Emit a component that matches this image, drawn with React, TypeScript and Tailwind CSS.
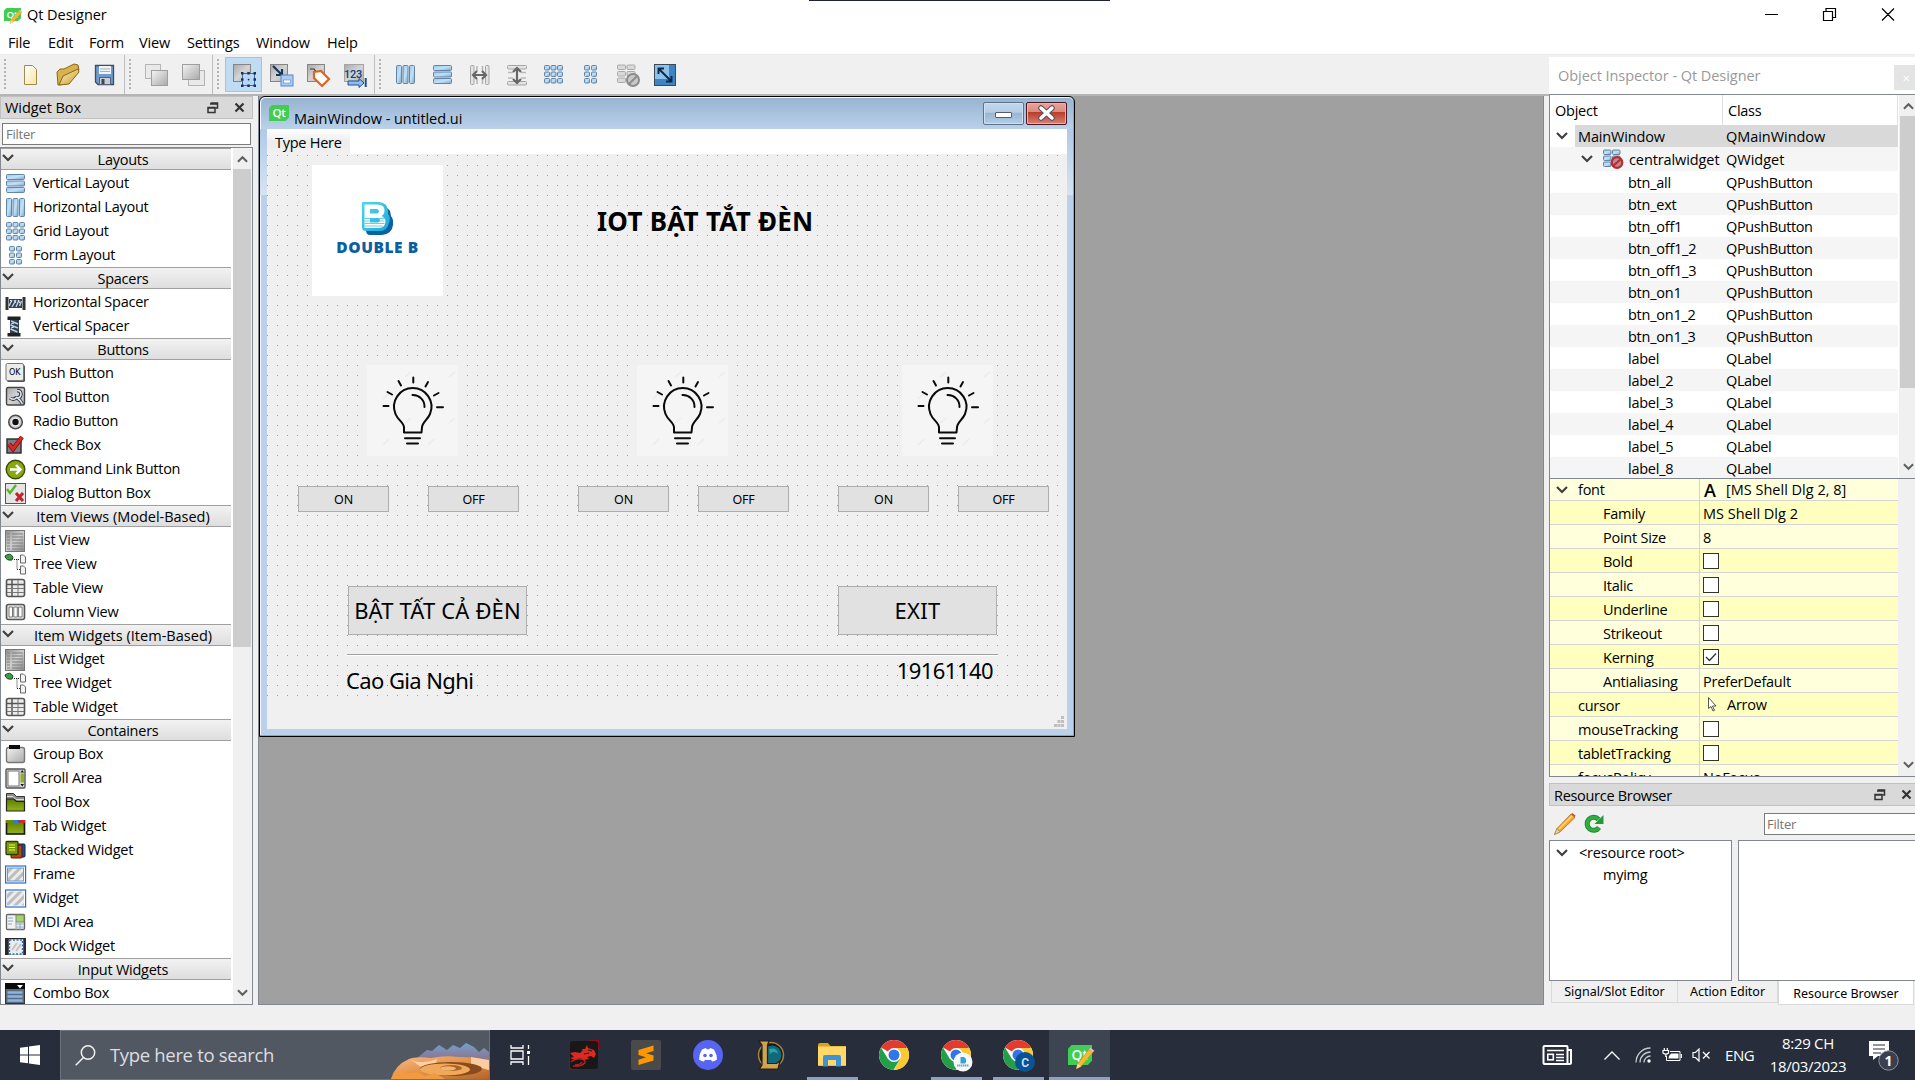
import React from "react";

const SEGOE = "font-['Open_Sans','Noto_Sans',sans-serif]";
const TAHOMA = "font-['Noto_Sans','Open_Sans',sans-serif]";

function Defs() {
  return (
    <svg width="0" height="0" className="absolute">
      <defs>
        <linearGradient id="blue" x1="0" y1="0" x2="1" y2="1">
          <stop offset="0" stopColor="#9cc6ea" />
          <stop offset="0.5" stopColor="#bfe2fa" />
          <stop offset="1" stopColor="#7ba6cf" />
        </linearGradient>
        <linearGradient id="gray" x1="0" y1="0" x2="1" y2="1">
          <stop offset="0" stopColor="#f4f4f4" />
          <stop offset="1" stopColor="#a9a9a9" />
        </linearGradient>
        <linearGradient id="dgray" x1="0" y1="0" x2="1" y2="1">
          <stop offset="0" stopColor="#8e8e8e" />
          <stop offset="0.5" stopColor="#cfcfcf" />
          <stop offset="1" stopColor="#8a8a8a" />
        </linearGradient>
        <linearGradient id="lgray" x1="0" y1="0" x2="1" y2="1">
          <stop offset="0" stopColor="#a8a8a8" />
          <stop offset="0.5" stopColor="#d4d4d4" />
          <stop offset="1" stopColor="#b4b4b4" />
        </linearGradient>
        <linearGradient id="green" x1="0" y1="0" x2="0" y2="1">
          <stop offset="0" stopColor="#5f7d00" />
          <stop offset="1" stopColor="#93b41a" />
        </linearGradient>
        <linearGradient id="gold" x1="0" y1="0" x2="1" y2="1">
          <stop offset="0" stopColor="#fdf3c0" />
          <stop offset="1" stopColor="#c99b2c" />
        </linearGradient>
        <linearGradient id="paper" x1="0" y1="0" x2="1" y2="1">
          <stop offset="0" stopColor="#ffffff" />
          <stop offset="1" stopColor="#f5e7a0" />
        </linearGradient>
        <linearGradient id="logo" x1="0" y1="0" x2="1" y2="1">
          <stop offset="0" stopColor="#4fd8ef" />
          <stop offset="1" stopColor="#1fa6d6" />
        </linearGradient>
        <linearGradient id="mount" x1="0" y1="0" x2="0" y2="1">
          <stop offset="0" stopColor="#6fa3cf" />
          <stop offset="0.5" stopColor="#8a7a9a" />
          <stop offset="1" stopColor="#7d6a78" />
        </linearGradient>
        <linearGradient id="sand" x1="0" y1="0" x2="1" y2="1">
          <stop offset="0" stopColor="#f7b98c" />
          <stop offset="0.5" stopColor="#e39445" />
          <stop offset="1" stopColor="#b5622a" />
        </linearGradient>
        <pattern id="hatch" width="6" height="6" patternUnits="userSpaceOnUse" patternTransform="rotate(45)">
          <rect width="6" height="6" fill="#ececec" />
          <rect width="3" height="6" fill="#bdbdbd" />
        </pattern>
      </defs>
    </svg>
  );
}

const rects = (list: number[][], fill = "url(#blue)", stroke = "#6583a3") =>
  list.map(([x, y, w, h], i) => <rect key={i} x={x} y={y} width={w} height={h} rx="1" fill={fill} stroke={stroke} />);

const grid = (cols: number[], rows: number[], w: number, h: number) =>
  rows.flatMap((y) => cols.map((x) => [x, y, w, h]));

const listIcon = (
  <>
    <rect x="0.5" y="0.5" width="19" height="21" fill="url(#dgray)" stroke="#777" />
    <path d="M2 4h3M7 4h11M2 7h3M7 7h11M2 10h3M7 10h11M2 13h3M7 13h11M2 16h3M7 16h11M2 19h3M7 19h11" stroke="#7f7f7f" />
  </>
);
const treeIcon = (
  <>
    <path d="M0 2q5-4 8 1l-1 3q-6 1-7-4z" fill="#3f9a48" stroke="#124d1b" />
    <path d="M9 5.500h6M12 5.500v10h3" stroke="#222" strokeDasharray="1 1" fill="none" />
    <path d="M15.500 1h3l2 2v6h-5zM15.500 12h3l2 2v6h-5z" fill="#f4f4f4" stroke="#666" />
  </>
);
const tableIcon = (
  <>
    <rect x="1.500" y="1.500" width="18" height="17" rx="2" fill="#ececec" stroke="#555" strokeWidth="1.600" />
    <path d="M2 6.500h17M7 2v16" stroke="#555" strokeWidth="1.500" />
    <path d="M2 10.500h17M2 14.500h17M13 2v16" stroke="#777" strokeWidth="1" />
  </>
);

const icons: Record<string, React.ReactNode> = {
  vl: rects([[1.5, 1.5, 18, 5], [1.5, 8, 18, 5], [1.5, 14.5, 18, 5]]),
  hl: rects([[1.5, 1.5, 5, 18], [8, 1.5, 5, 18], [14.5, 1.5, 5, 18]]),
  gl: rects(grid([1.5, 8, 14.5], [1.5, 8, 14.5], 5, 4.5)),
  fl: rects(grid([4.5, 11.5], [1.5, 8, 14.5], 5, 4.5)),
  hs: (
    <>
      <rect x="0.5" y="5" width="3" height="13" fill="#333" />
      <rect x="17.5" y="5" width="3" height="13" fill="#333" />
      <rect x="4" y="7" width="13" height="9" fill="#333f4d" />
      <path d="M4 14l3-6M7 15l4-7M11 15l3-7M14.500 14l2-5" stroke="#b9cfe6" strokeWidth="1.500" fill="none" />
      <path d="M5 8l2 2M9 8l2 3M13 8l2 3" stroke="#e5eef6" strokeWidth="1" fill="none" />
    </>
  ),
  vs: (
    <>
      <rect x="2.500" y="0.500" width="13" height="3.500" fill="#222" />
      <rect x="2.500" y="17" width="13" height="3.500" fill="#222" />
      <rect x="5" y="4" width="9" height="13" fill="#333f4d" />
      <path d="M6 5l7 3M5.500 9l7.500 3M5.500 13l7 3" stroke="#b9cfe6" strokeWidth="1.500" fill="none" />
      <path d="M6 8l3-1M6 12l3-1" stroke="#e5eef6" fill="none" />
    </>
  ),
  pb: (
    <>
      <rect x="2" y="2" width="18" height="17" rx="1.500" fill="#555" />
      <rect x="1" y="0.500" width="17.500" height="17" rx="1.500" fill="#ececec" stroke="#777" />
      <text x="9.700" y="11.500" textAnchor="middle" fontSize="8" letterSpacing="0" fontFamily="DejaVu Sans">OK</text>
    </>
  ),
  tb: (
    <>
      <rect x="1.500" y="0.500" width="18" height="17.500" rx="1.500" fill="url(#lgray)" stroke="#444" strokeWidth="1.400" />
      <path d="M12 3.500q4 0 4 3.500t-3.500 4q3 2 5 6" stroke="#2c3440" strokeWidth="3.400" fill="none" />
      <path d="M5 11q4 3 7-1" stroke="#2c3440" strokeWidth="3.400" fill="none" />
      <path d="M12 3.500q4 0 4 3.500t-3.500 4q3 2 5 6M5 11q4 3 7-1" stroke="#dde5ee" strokeWidth="1.600" fill="none" />
    </>
  ),
  rb: (
    <>
      <circle cx="10.500" cy="11" r="6.800" fill="#c9c9c9" stroke="#4c4c4c" strokeWidth="1.500" />
      <circle cx="10.500" cy="11" r="4.500" fill="#f1f1f1" />
      <circle cx="10.500" cy="11" r="3.200" fill="#111" />
    </>
  ),
  cb: (
    <>
      <rect x="2" y="4" width="14" height="14" fill="#7e7e7e" stroke="#333" strokeWidth="1.500" />
      <path d="M4 9l4 5 9-12" stroke="#7a0c0c" strokeWidth="4.500" fill="none" />
      <path d="M4 9l4 5 9-12" stroke="#e02626" strokeWidth="3" fill="none" />
    </>
  ),
  cl: (
    <>
      <circle cx="10.500" cy="10.500" r="9.300" fill="#8aa80f" stroke="#3e4d05" strokeWidth="1.400" />
      <path d="M5 10.500h10M11 6l4.500 4.500L11 15" stroke="#fff" strokeWidth="2.400" fill="none" />
    </>
  ),
  db: (
    <>
      <rect x="0.500" y="0.500" width="20" height="20" fill="#e4e4e4" stroke="#555" />
      <path d="M2 6l3 4 6-8" stroke="#58b52c" strokeWidth="2.400" fill="none" />
      <path d="M11 10l7 8M18 10l-7 8" stroke="#c3222c" strokeWidth="3" />
    </>
  ),
  li: listIcon,
  tr: treeIcon,
  ta: tableIcon,
  co: (
    <>
      <rect x="1.500" y="2.500" width="18" height="15" rx="2" fill="#e9e9e9" stroke="#555" strokeWidth="1.600" />
      <path d="M4 5h3.500v10H4zM8.800 5h3.500v10H8.800zM13.600 5h3.500v10h-3.500z" fill="#fff" stroke="#777" />
    </>
  ),
  gb: (
    <>
      <rect x="1.500" y="3.500" width="18" height="15" rx="2" fill="url(#gray)" stroke="#777" strokeWidth="1.400" />
      <rect x="4" y="1" width="11" height="4" fill="#0c0c0c" />
    </>
  ),
  sa: (
    <>
      <rect x="1" y="1" width="19" height="19" rx="1" fill="#d6d6d6" stroke="#555" strokeWidth="1.400" />
      <rect x="3" y="3" width="11" height="15" fill="#fff" stroke="#777" />
      <rect x="15.500" y="5.500" width="3.500" height="9" fill="#8fb020" />
      <path d="M15.500 4.500l1.700-2.500 1.800 2.500zM15.500 16l1.700 2.500L19 16z" fill="#111" />
    </>
  ),
  tx: (
    <>
      <path d="M1.500 1.500h7l3 3h8v14h-18z" fill="#8c8c8c" stroke="#333" />
      <path d="M2 4.500h6l3 3h8" stroke="#ddd" fill="none" />
      <path d="M1.500 7h7l3 2.500h8v9.500h-18z" fill="url(#green)" stroke="#222" strokeWidth="1.200" />
    </>
  ),
  tw: (
    <>
      <rect x="1.500" y="5" width="18" height="13" fill="url(#green)" stroke="#161616" strokeWidth="1.600" />
      <rect x="1" y="4" width="7" height="3" fill="#6d8a05" />
      <rect x="8" y="4" width="5.500" height="3" fill="#2d7ad6" />
      <rect x="14" y="4" width="6" height="3" fill="#d3262b" />
    </>
  ),
  sw: (
    <>
      <rect x="9" y="4" width="11" height="13" rx="1" fill="#1c4f9e" stroke="#0b2450" />
      <rect x="6" y="5" width="11" height="13" rx="1" fill="#b8460f" stroke="#4b1a02" />
      <rect x="1" y="1.500" width="12" height="13" rx="1" fill="#7d9c0c" stroke="#2d3a00" strokeWidth="1.300" />
      <path d="M4 5h6M4 7.500h6M4 10h6" stroke="#e9f255" strokeWidth="1.200" />
    </>
  ),
  fr: (
    <>
      <rect x="0.600" y="2" width="20" height="17" fill="#fff" stroke="#2a6fc9" strokeWidth="1.200" />
      <rect x="2.500" y="4" width="16" height="13" fill="url(#hatch)" stroke="#6a9ad8" />
    </>
  ),
  wi: (
    <>
      <rect x="0.600" y="2" width="20" height="17" fill="#fff" stroke="#2a6fc9" strokeWidth="1.200" />
      <rect x="2" y="3.500" width="17" height="14" fill="url(#hatch)" />
    </>
  ),
  md: (
    <>
      <rect x="1.500" y="2.500" width="18" height="15" rx="1" fill="#f2f2f2" stroke="#666" strokeWidth="1.300" />
      <rect x="11" y="3" width="8" height="7" fill="#a8cf7c" stroke="#6f8f4a" />
      <path d="M3 6h5M3 9h5M3 12h4M11 12h8M11 15h8M11 10v8M15 11v7" stroke="#8fa6c4" />
    </>
  ),
  dw: (
    <>
      <rect x="0" y="2" width="21" height="17" fill="#2b2b2b" />
      <rect x="4.500" y="4" width="13" height="14" fill="#ececec" stroke="#fff" strokeWidth="1.400" />
      <rect x="4.500" y="4" width="13" height="14" fill="none" stroke="#2a6fc9" strokeWidth="1.400" strokeDasharray="2 1.500" />
      <path d="M7 14l5-7M11 15l5-7" stroke="#c2c2c2" strokeWidth="2" />
    </>
  ),
  cx: (
    <>
      <rect x="0.500" y="0.500" width="19" height="20" fill="#5e6b78" stroke="#333" />
      <rect x="0" y="0" width="20" height="6" fill="#0b0b0b" />
      <path d="M12 2h6l-3 3.500z" fill="#fff" />
      <path d="M2.500 9.500h15M2.500 13.500h15M2.500 17.500h15" stroke="#86b6ea" strokeWidth="2.400" />
    </>
  ),
  new: <path d="M4.500 1.500h8l4 4v15h-12z" fill="url(#paper)" stroke="#a38a4e" />,
  open: (
    <>
      <path d="M0 8l3-3h4L17 0l4 1 1 5-12 14-9 1z" fill="#d8b24d" stroke="#8a6518" />
      <path d="M2 21L6 12 21 5l1 3-10 12z" fill="url(#gold)" stroke="#8a6518" />
    </>
  ),
  save: (
    <>
      <path d="M1.500 1.500h18v19H4l-2.500-2.500z" fill="#6f9bcd" stroke="#3a4d69" strokeWidth="1.300" />
      <rect x="5" y="2" width="12" height="8" fill="#f1f4f8" />
      <path d="M6 5h10M6 7.500h10" stroke="#9fb0c4" />
      <rect x="5.500" y="13.500" width="11" height="7" fill="#c9cdd3" stroke="#53617a" />
      <rect x="7.500" y="15" width="3" height="5" fill="#39475d" />
    </>
  ),
  front: (
    <>
      <rect x="0.500" y="0.500" width="15" height="14" fill="#e9e9e9" stroke="#b4b4b4" />
      <rect x="6.500" y="6.500" width="16" height="15" fill="url(#gray)" stroke="#9e9e9e" />
    </>
  ),
  back: (
    <>
      <rect x="6.500" y="6.500" width="16" height="15" fill="#e9e9e9" stroke="#b4b4b4" />
      <rect x="0.500" y="0.500" width="17" height="15" fill="url(#gray)" stroke="#9e9e9e" />
    </>
  ),
  ew: (
    <>
      <rect x="0.500" y="0.500" width="17" height="17" fill="url(#lgray)" stroke="#858585" />
      <rect x="9.500" y="9.500" width="12" height="12" fill="#b9d6fa" stroke="#3a6fb8" />
      <path d="M8 8h2.500v2.500H8zM14.300 8h2.500v2.500h-2.500zM20.500 8H23v2.500h-2.500zM8 14.300h2.500v2.500H8zM20.500 14.300H23v2.500h-2.500zM8 20.500h2.500V23H8zM14.300 20.500h2.500V23h-2.500zM20.500 20.500H23V23h-2.500z" fill="#1b3152" />
      <rect x="14.800" y="14.800" width="1.600" height="1.600" fill="#1b3152" />
    </>
  ),
  es: (
    <>
      <rect x="0.500" y="0.500" width="17" height="17" fill="url(#lgray)" stroke="#858585" />
      <path d="M3 2l8 8M12 5v6H6" stroke="#12365c" strokeWidth="2.200" fill="none" />
      <rect x="11" y="11" width="12" height="11" fill="#a9cbf6" stroke="#5b86c4" />
      <rect x="13.500" y="16" width="7" height="3" fill="#fff" stroke="#5b86c4" strokeWidth="0.600" />
    </>
  ),
  eb: (
    <>
      <rect x="0.500" y="0.500" width="17" height="17" fill="url(#lgray)" stroke="#858585" />
      <path d="M3 5h4l3 4" stroke="#333" fill="none" strokeWidth="1.200" />
      <path d="M7 8l7-1 8 8-7 7-8-8z" fill="#fff" stroke="#e0641b" strokeWidth="2.200" />
    </>
  ),
  et: (
    <>
      <rect x="0.500" y="0.500" width="19" height="17" fill="url(#lgray)" stroke="#a5a5a5" />
      <text x="0" y="14" fontSize="11" letterSpacing="-0.200" fontFamily="Roboto" fill="#12417e" fontWeight="500">123</text>
      <path d="M4 17h11v-2.500l5 4.500-5 4.500V21H4z" fill="#8fbef2" stroke="#1c4f94" />
      <path d="M21.700 14v9" stroke="#1c4f94" strokeWidth="2" />
    </>
  ),
  hsp: (
    <>
      {rects([[1.5, 1.5, 3.5, 19], [16.5, 1.5, 3.5, 19]], "#e3e3e3", "#a5a5a5")}
      <path d="M8 2v5M8 15v5M13.500 2v5M13.500 15v5" stroke="#b0b0b0" strokeWidth="1.400" />
      <path d="M4 11h13M8 7l-4 4 4 4M13 7l4 4-4 4" stroke="#666" strokeWidth="2.200" fill="none" />
    </>
  ),
  vsp: (
    <>
      {rects([[1.5, 1.5, 19, 3.5], [1.5, 17.5, 19, 3.5]], "#e3e3e3", "#a5a5a5")}
      <path d="M2 8.500h5M15 8.500h5M2 14h5M15 14h5" stroke="#b9b9b9" strokeWidth="1.400" />
      <path d="M11 4v15M7 8l4-4 4 4M7 15l4 4 4-4" stroke="#666" strokeWidth="2.200" fill="none" />
    </>
  ),
  brk: (
    <>
      {rects(grid([0.5, 10], [1, 7.5, 14], 8, 4.5), "#d9d9d9", "#aaaaaa")}
      <circle cx="16" cy="16" r="6" fill="#c8c8c8" stroke="#8c8c8c" strokeWidth="2" />
      <path d="M12 20l8-8" stroke="#8c8c8c" strokeWidth="2" />
    </>
  ),
  brkc: (
    <>
      {rects(grid([0.5, 9.5], [1, 7, 13], 7.5, 4.500))}
      <circle cx="14" cy="13.500" r="5.300" fill="#b98a90" stroke="#b92b30" strokeWidth="2.200" />
      <path d="M10 17l8-7" stroke="#b92b30" strokeWidth="2.200" />
    </>
  ),
  adj: (
    <>
      <rect x="0.500" y="0.500" width="21" height="21" fill="#3d84c2" stroke="#3b4a59" />
      <rect x="1" y="1" width="14" height="14" fill="#8cc1ea" />
      <path d="M5 5l12 12M4.500 10V4.500H10M12 17.500h5.500V12" stroke="#0c2744" strokeWidth="1.900" fill="none" />
    </>
  ),
};

function Ico({ n, s = 21 }: { n: string; s?: number }) {
  return (
    <svg width={s} height={s} viewBox={`0 0 ${s} ${s}`} className="shrink-0 overflow-visible">
      {icons[n]}
    </svg>
  );
}

function Chevron({ up = false, w = 12, c = "#404040" }: { up?: boolean; w?: number; c?: string }) {
  return (
    <svg width={w} height="8" viewBox="0 0 12 8" className="shrink-0">
      <path d={up ? "M1 7l5-5 5 5" : "M1 1l5 5 5-5"} stroke={c} strokeWidth="2.200" fill="none" />
    </svg>
  );
}

function QtMark({ w, h, pencil = false }: { w: number; h: number; pencil?: boolean }) {
  return (
    <svg width={w} height={h} viewBox="0 0 20 16" preserveAspectRatio="none" className="shrink-0 overflow-visible">
      <path d="M3 0h17v12.500L16.500 16H0V3z" fill="#41cd52" />
      <text x={pencil ? 3 : 3.5} y="11.700" fontSize="11.500" fontWeight="600" fontFamily="Open Sans" fill="#fff">Qt</text>
      {pencil && (
        <>
          <path d="M17.500 3.500l3 2.500L11 17l-4 2 1-4z" fill="#f3b930" stroke="#c78e1b" strokeWidth="0.500" />
          <path d="M17.500 3.500l1-1.500 3.500 2.500-1.500 1.500z" fill="#e9b9b0" />
          <path d="M8 15l3 2-4 2z" fill="#f2dcb8" />
        </>
      )}
    </svg>
  );
}

function DockButtons() {
  return (
    <>
      <svg width="12" height="12" viewBox="0 0 12 12" className="shrink-0">
        <path d="M3.500 1h7v5h-2M3 2h8" stroke="#333" strokeWidth="1.500" fill="none" />
        <path d="M1 5.500h7v5H1zM1 6h7" stroke="#333" strokeWidth="1.500" fill="none" />
      </svg>
      <svg width="11" height="11" viewBox="0 0 11 11" className="shrink-0">
        <path d="M1.500 1.500l8 8M9.500 1.500l-8 8" stroke="#333" strokeWidth="2.200" />
      </svg>
    </>
  );
}

const menus: [string, string][] = [
  ["File", "w-[40px]"],
  ["Edit", "w-[41px]"],
  ["Form", "w-[50px]"],
  ["View", "w-[48px]"],
  ["Settings", "w-[69px]"],
  ["Window", "w-[71px]"],
  ["Help", "w-[50px]"],
];

const groups: { title: string; track?: string; items: [string, string][] }[] = [
  { title: "Layouts", items: [["vl", "Vertical Layout"], ["hl", "Horizontal Layout"], ["gl", "Grid Layout"], ["fl", "Form Layout"]] },
  { title: "Spacers", items: [["hs", "Horizontal Spacer"], ["vs", "Vertical Spacer"]] },
  {
    title: "Buttons",
    items: [["pb", "Push Button"], ["tb", "Tool Button"], ["rb", "Radio Button"], ["cb", "Check Box"], ["cl", "Command Link Button"], ["db", "Dialog Button Box"]],
  },
  { title: "Item Views (Model-Based)", track: "tracking-[-0.020px]", items: [["li", "List View"], ["tr", "Tree View"], ["ta", "Table View"], ["co", "Column View"]] },
  { title: "Item Widgets (Item-Based)", track: "tracking-[0.020px]", items: [["li", "List Widget"], ["tr", "Tree Widget"], ["ta", "Table Widget"]] },
  {
    title: "Containers",
    items: [
      ["gb", "Group Box"], ["sa", "Scroll Area"], ["tx", "Tool Box"], ["tw", "Tab Widget"], ["sw", "Stacked Widget"],
      ["fr", "Frame"], ["wi", "Widget"], ["md", "MDI Area"], ["dw", "Dock Widget"],
    ],
  },
  { title: "Input Widgets", items: [["cx", "Combo Box"]] },
];

function Handle() {
  return <div className="h-[31px] w-[3px] shrink-0 bg-[linear-gradient(#b4b4b4_50%,transparent_50%)] bg-[size:2px_4px] bg-repeat-y" />;
}

function ToolGroup({ names, width, active }: { names: string[]; width: string; active?: string }) {
  return (
    <div className={`flex h-[39px] shrink-0 items-center border-r border-[#bdbdbd] pl-[4px] ${width}`}>
      <Handle />
      <div className="ml-[5px] flex">
        {names.map((n) => (
          <div
            key={n}
            className={`flex h-[35px] w-[37px] items-center justify-center ${n === active ? "border border-[#90c8f6] bg-[#c0dcf3]" : ""}`}
          >
            <Ico n={n} s={22} />
          </div>
        ))}
      </div>
    </div>
  );
}

function WidgetBox() {
  return (
    <div className="flex w-[258px] shrink-0 flex-col">
      <div className="flex h-[23px] w-[253px] items-center border border-[#c0c0c0] bg-[#d9d9d9] pr-[7px] pl-[4px]">
        <span className="flex-1 pt-[1px] tracking-[-0.050px]">Widget Box</span>
        <div className="flex items-center gap-[15px]"><DockButtons /></div>
      </div>
      <div className="mt-[4px] ml-[2px] flex h-[22px] w-[249px] items-center border border-[#7a7a7a] bg-white pl-[3px] text-[13px] text-[#757575]">
        Filter
      </div>
      <div className="mt-[2px] flex h-[858px] w-[253px] overflow-hidden border border-[#828790] bg-white">
        <div className="w-[230px] shrink-0">
          {groups.map((g) => (
            <div key={g.title}>
              <div className="mb-[1px] flex h-[22px] items-center border-y border-[#a0a0a0] bg-gradient-to-b from-[#f2f2f2] to-[#dedede]">
                <div className="-mt-[2px] ml-[1px] w-[14px]"><Chevron /></div>
                <span className={`flex-1 pt-[2px] pr-[1px] text-center ${g.track ?? ""}`}>{g.title}</span>
              </div>
              {g.items.map(([i, t]) => (
                <div key={t} className="flex h-[24px] items-center gap-[7px] pl-[4px]">
                  <Ico n={i} />
                  <span>{t}</span>
                </div>
              ))}
            </div>
          ))}
        </div>
        <div className="ml-auto flex w-[19px] flex-col items-center bg-[#f0f0f0] pr-[1px]">
          <div className="flex h-[21px] items-center"><Chevron up w={11} c="#606060" /></div>
          <div className="h-[478px] w-full bg-[#cdcdcd]" />
          <div className="mt-auto flex h-[22px] items-center"><Chevron w={11} c="#606060" /></div>
        </div>
      </div>
    </div>
  );
}

function Bulb({ pos }: { pos: string }) {
  return (
    <svg width="91" height="91" viewBox="0 0 91 91" className={`absolute top-[210px] bg-[#f5f5f5] ${pos}`}>
      <path d="M38 12l6-5M82 12l6-5M16 34l6-6M38 58l6-5M82 58l6-5M16 80l6-6M61 80l6-6" stroke="#ececec" strokeWidth="1.500" />
      <g fill="none" stroke="#0a0a0a" strokeWidth="2" strokeLinecap="round" strokeLinejoin="round">
        <path d="M37 67.500v-5c0-5-6-7-8.500-13.500A18.700 18.700 0 1 1 63 49c-2.500 6-8 8.500-8 13.500l-.5 5H37z" />
        <path d="M45.500 30A11.500 11.500 0 0 1 57.500 42" />
        <path d="M38 73.200h15M40 78.500h11" />
        <path d="M46.300 12.500v5M31.500 16l2.500 4.500M61 17l-2.500 4.500M20.500 27l4.500 2.500M71.500 28l-4.500 2.500M16.500 41h5M70 42.300h6" />
      </g>
    </svg>
  );
}

const formButton = "absolute flex items-center justify-center border border-[#adadad] bg-[#e1e1e1] whitespace-nowrap";
const smallButtons: [string, string][] = [
  ["ON", "left-[31px]"], ["OFF", "left-[161px]"], ["ON", "left-[311px]"],
  ["OFF", "left-[431px]"], ["ON", "left-[571px]"], ["OFF", "left-[691px]"],
];

function FormWindow() {
  return (
    <div className="flex h-[641px] w-[816px] flex-col rounded-t-[6px] border border-black bg-[#b9d1ea] shadow-[inset_-1px_-1px_0_#3fc3e3,inset_1px_1px_0_#f4f8fc]">
      <div className="mx-px mt-px flex h-[31px] items-center rounded-t-[5px] bg-gradient-to-b from-[#99b4d1] to-[#b9d1ea] pl-[8px]">
        <div className="-mt-px"><QtMark w={20} h={16} /></div>
        <span className="mt-[11px] ml-[5px] flex-1 tracking-[-0.050px]">MainWindow - untitled.ui</span>
        <div className="-mt-px mr-[6px] flex gap-[2px]">
          <div className="flex h-[23px] w-[41px] items-center justify-center rounded-[2px] border border-[#5d7289] bg-[linear-gradient(#c3d7ec_0%,#b4cce4_45%,#98b3d0_46%,#b4cde8_100%)] shadow-[inset_0_0_0_1px_#cfe0f1]">
            <div className="mt-[3px] h-[6px] w-[17px] rounded-[1px] border border-[#545c6e] bg-white" />
          </div>
          <div className="flex h-[23px] w-[41px] items-center justify-center rounded-[2px] border border-[#4a1420] bg-[linear-gradient(#e8a598_0%,#da8b7e_42%,#b83a26_43%,#d98274_100%)] shadow-[inset_0_0_0_1px_#e9b5aa]">
            <svg width="19" height="16" viewBox="0 0 19 16">
              <path d="M4 3l11 10M15 3L4 13" stroke="#545060" strokeWidth="5.500" strokeLinecap="round" />
              <path d="M4 3l11 10M15 3L4 13" stroke="#fff" strokeWidth="3.500" strokeLinecap="round" />
            </svg>
          </div>
        </div>
      </div>
      <div className="flex h-[600px]">
        <div className="h-[66px] w-[7px] bg-gradient-to-b from-[#b0cae6] to-[#d5e4f4]" />
        <div className="flex w-[800px] flex-col bg-[#f0f0f0]">
          <div className="h-[25px] bg-white">
            <div className="flex h-[25px] w-[83px] items-center bg-gradient-to-b from-white via-[#ededed] to-[#f1f1f1] pt-[2px] pl-[8px]">Type Here</div>
          </div>
          <div className="h-px" />
          <div className="relative h-[541px] bg-[conic-gradient(from_270deg_at_1px_1px,#9c9c9c_90deg,transparent_0)] bg-[size:10px_10px]">
            <div className="absolute top-[10px] left-[45px] flex h-[131px] w-[131px] flex-col items-center bg-white pt-[37px]">
              <svg width="31" height="34" viewBox="0 0 31 34" className="shrink-0">
                <path d="M5 4h15q9 2 9 10 3 4 2 9-1 9-11 10H8q-4 0-4-5z" fill="#0a62a4" />
                <path d="M0 0h17q9 1 9 9v3q3 3 1 9-2 8-9 8H4q-4 0-4-4z" fill="url(#logo)" />
                <path
                  d="M2.500 2.500h13q7 0 7 6 0 4-3 5.500 4 2 4 5.500 0 6-7 6.500h-14zM8 7v4.500h7q2-1 2-2.300T15 7zM8 16v4.500h8q2-1 2-2.300T16 16z"
                  fill="#fff"
                  fillRule="evenodd"
                />
                <path d="M2.500 16.500h20M2.500 19h20M2.500 21.500h20M2.500 24h18" stroke="#3fc4e6" strokeWidth="0.800" />
              </svg>
              <span className="mt-[2px] font-['Open_Sans',sans-serif] text-[15.500px] leading-[18px] font-extrabold tracking-[0.550px] whitespace-nowrap text-[#0b5f9f]">
                DOUBLE B
              </span>
            </div>
            <div className={`absolute top-[48px] left-[330px] text-[26px] leading-[36px] font-bold tracking-[0.250px] whitespace-nowrap ${TAHOMA}`}>
              IOT BẬT TẮT ĐÈN
            </div>
            <Bulb pos="left-[100px]" />
            <Bulb pos="left-[370px]" />
            <Bulb pos="left-[635px]" />
            {smallButtons.map(([t, pos]) => (
              <div key={pos} className={`${formButton} top-[331px] h-[26px] w-[91px] pt-[1px] text-[12.500px] tracking-[-0.200px] ${TAHOMA} ${pos}`}>{t}</div>
            ))}
            <div className={`${formButton} top-[431px] left-[81px] h-[49px] w-[179px] pb-[2px] text-[22px] tracking-[0.150px] ${TAHOMA}`}>BẬT TẤT CẢ ĐÈN</div>
            <div className={`${formButton} top-[431px] left-[571px] h-[49px] w-[159px] pb-[2px] text-[22px] tracking-[0.300px] ${TAHOMA}`}>EXIT</div>
            <div className="absolute top-[499px] left-[80px] h-[2px] w-[651px] border-t border-[#a0a0a0] bg-white" />
            <div className={`absolute top-[509px] left-[79px] text-[22px] leading-[32px] tracking-[-0.600px] whitespace-nowrap ${TAHOMA}`}>Cao Gia Nghi</div>
            <div className={`absolute top-[499px] right-[74px] text-[22px] leading-[32px] tracking-[-0.550px] whitespace-nowrap ${TAHOMA}`}>19161140</div>
          </div>
          <div className="flex flex-1 items-end justify-end pr-[3px] pb-[2px]">
            <svg width="10" height="11" viewBox="0 0 10 11">
              <path d="M7 0h3v3H7zM3.500 4h3v3h-3zM7 4h3v3H7zM0 8h3v3H0zM3.500 8h3v3h-3zM7 8h3v3H7z" fill="#bfbfbf" />
            </svg>
          </div>
        </div>
        <div className="h-[66px] w-[6px] bg-gradient-to-b from-[#b0cae6] to-[#d5e4f4]" />
      </div>
    </div>
  );
}

const objects: [string, string][] = [
  ["btn_all", "QPushButton"], ["btn_ext", "QPushButton"], ["btn_off1", "QPushButton"], ["btn_off1_2", "QPushButton"],
  ["btn_off1_3", "QPushButton"], ["btn_on1", "QPushButton"], ["btn_on1_2", "QPushButton"], ["btn_on1_3", "QPushButton"],
  ["label", "QLabel"], ["label_2", "QLabel"], ["label_3", "QLabel"], ["label_4", "QLabel"], ["label_5", "QLabel"], ["label_8", "QLabel"],
];

function Check({ on = false }: { on?: boolean }) {
  return (
    <div className="flex h-[16px] w-[16px] items-center justify-center border border-[#333] bg-white">
      {on && (
        <svg width="12" height="10" viewBox="0 0 12 10">
          <path d="M1 5l3.500 3.500L11 1.500" stroke="#333" strokeWidth="1.300" fill="none" />
        </svg>
      )}
    </div>
  );
}

const props: [string, React.ReactNode, boolean][] = [
  ["Family", <span className="pt-[2px] tracking-[0px]">MS Shell Dlg 2</span>, true],
  ["Point Size", <span className="pt-[2px]">8</span>, true],
  ["Bold", <Check />, true],
  ["Italic", <Check />, true],
  ["Underline", <Check />, true],
  ["Strikeout", <Check />, true],
  ["Kerning", <Check on />, true],
  ["Antialiasing", <span className="pt-[2px]">PreferDefault</span>, true],
  [
    "cursor",
    <div className="flex items-center gap-[10px] pl-[5px]">
      <svg width="9" height="15" viewBox="0 0 9 15">
        <path d="M.5.500v11l2.500-2 2 4.500 1.500-.7-2-4.300H8z" fill="#fff" stroke="#444" strokeWidth="0.900" />
      </svg>
      <span className="pt-[1px]">Arrow</span>
    </div>,
    false,
  ],
  ["mouseTracking", <Check />, false],
  ["tabletTracking", <Check />, false],
  ["focusPolicy", <span className="pt-[2px]">NoFocus</span>, false],
];

function RightDock() {
  return (
    <div className="-mt-[39px] flex h-[948px] w-[366px] shrink-0 flex-col overflow-hidden">
      <div className="flex h-[38px] items-center bg-white pl-[9px] text-[#999]">
        <span className="flex-1 pt-[1px] tracking-[-0.050px]">Object Inspector - Qt Designer</span>
        <div className="mt-[4px] flex h-[25px] w-[21px] items-center justify-center bg-[#e4e4e4] pl-[3px] text-[13px] text-white">×</div>
      </div>
      <div className="flex h-[384px] shrink-0 overflow-hidden border-t border-l border-[#828790] bg-white">
        <div className="w-[348px] shrink-0">
          <div className="flex h-[30px] items-center">
            <div className="flex h-full w-[173px] items-center border-r border-[#e0e0e0] pt-[2px] pl-[5px]">Object</div>
            <div className="flex h-full w-[175px] items-center border-r border-[#e0e0e0] pt-[2px] pl-[5px]">Class</div>
          </div>
          <div className="flex h-[22px] items-center">
            <div className="flex w-[25px] pl-[6px]"><Chevron /></div>
            <div className="flex h-full flex-1 items-center bg-[#d9d9d9] pt-[2px]">
              <span className="w-[151px] pl-[3px] tracking-[-0.150px]">MainWindow</span>
              <span className="tracking-[-0.050px]">QMainWindow</span>
            </div>
          </div>
          <div className="flex h-[24px] items-center bg-[#f5f5f5] pl-[31px]">
            <Chevron />
            <div className="ml-[10px] w-[26px]"><Ico n="brkc" s={20} /></div>
            <span className="w-[97px] pt-[2px] tracking-[-0.100px]">centralwidget</span>
            <span className="pt-[2px] tracking-[0px]">QWidget</span>
          </div>
          {objects.map(([o, c], i) => (
            <div key={o} className={`flex h-[22px] items-center pt-[2px] pl-[78px] ${i % 2 ? "bg-[#f5f5f5]" : ""}`}>
              <span className="w-[98px]">{o}</span>
              <span className="tracking-[-0.400px]">{c}</span>
            </div>
          ))}
        </div>
        <div className="ml-[1px] flex w-[19px] shrink-0 flex-col bg-[#f0f0f0] pl-[4px]">
          <div className="flex h-[21px] items-center"><Chevron up w={11} c="#606060" /></div>
          <div className="-ml-[3px] h-[272px] bg-[#cdcdcd]" />
          <div className="mt-auto mb-[7px]"><Chevron w={11} c="#606060" /></div>
        </div>
      </div>
      <div className="flex h-[299px] shrink-0 overflow-hidden border-y border-l border-[#828790] bg-[#f0f0f0]">
        <div className="w-[348px] shrink-0 overflow-hidden">
          <div className="flex h-[22px] border-b border-[#d4d4d4] bg-[#ffffdc]">
            <div className="flex w-[150px] items-center gap-[10px] border-r border-[#d4d4d4] pl-[6px]"><Chevron /><span>font</span></div>
            <div className="flex items-center pl-[4px]">
              <span className="w-[22px] text-[18px] font-semibold">A</span>
              <span className="tracking-[0px]">[MS Shell Dlg 2, 8]</span>
            </div>
          </div>
          {props.map(([k, v, sub], i) => (
            <div key={k} className={`flex h-[24px] border-b border-[#d4d4d4] ${i % 2 ? "bg-[#ffffdc]" : "bg-[#ffffbf]"}`}>
              <div className={`flex w-[150px] items-center border-r border-[#d4d4d4] pt-[2px] ${sub ? "pl-[53px]" : "pl-[28px]"}`}>{k}</div>
              <div className="flex items-center pl-[3px]">{v}</div>
            </div>
          ))}
        </div>
        <div className="flex flex-1 flex-col justify-end pb-[7px] pl-[5px]"><Chevron w={11} c="#606060" /></div>
      </div>
      <div className="mt-[6px] flex h-[23px] shrink-0 items-center border border-r-0 border-[#c0c0c0] bg-[#d9d9d9] pr-[3px] pl-[4px]">
        <span className="flex-1 pt-[2px] tracking-[-0.300px]">Resource Browser</span>
        <div className="flex items-center gap-[15px]"><DockButtons /></div>
      </div>
      <div className="mt-[7px] flex h-[22px] shrink-0 items-center">
        <svg width="22" height="22" viewBox="0 0 22 22" className="ml-[5px]">
          <path d="M0.500 21.500l2.500-6L17 1l4 3.500L6 19z" fill="#f0a830" stroke="#b5711a" strokeWidth="0.800" />
          <path d="M5 16L18 3" stroke="#ffd98a" strokeWidth="1.500" />
          <path d="M0.500 21.500l2.500-6 3 3.500z" fill="#edd3a5" stroke="#8f7c5c" strokeWidth="0.600" />
          <path d="M17 1l1.500-1 3 2.500L21 4.500z" fill="#c4574b" />
        </svg>
        <svg width="20" height="20" viewBox="0 0 20 20" className="ml-[8px]">
          <path d="M15 13.500a6.500 6.500 0 1 1-.5-8" stroke="#1e8a2e" strokeWidth="5" fill="none" />
          <path d="M15 13.500a6.500 6.500 0 1 1-.5-8" stroke="#35ad45" strokeWidth="3" fill="none" />
          <path d="M19.500 1v9h-9z" fill="#27983a" />
        </svg>
        <div className="ml-auto flex h-[22px] w-[151px] items-center border border-r-0 border-[#7a7a7a] bg-white pl-[2px] text-[13px] text-[#757575]">Filter</div>
      </div>
      <div className="mt-[5px] flex h-[141px] shrink-0 gap-[6px]">
        <div className="w-[183px] border border-[#828790] bg-white pt-[1px]">
          <div className="flex h-[22px] items-center pl-[6px]"><Chevron /><span className="ml-[11px] tracking-[-0.200px]">&lt;resource root&gt;</span></div>
          <div className="flex h-[22px] items-center pl-[53px]">myimg</div>
        </div>
        <div className="flex-1 border border-r-0 border-[#828790] bg-white" />
      </div>
      <div className={`flex text-[12.500px] tracking-[-0.020px] ${TAHOMA}`}>
        <div className="ml-[2px] flex h-[22px] w-[127px] items-center justify-center border border-t-0 border-[#d9d9d9] pt-[1px]">Signal/Slot Editor</div>
        <div className="flex h-[22px] w-[100px] items-center justify-center border border-t-0 border-l-0 border-[#d9d9d9] pt-[1px]">Action Editor</div>
        <div className="flex h-[24px] w-[136px] items-center justify-center border border-t-0 border-[#d9d9d9] bg-white pt-[2px]">Resource Browser</div>
      </div>
    </div>
  );
}

function Chrome({ badge }: { badge?: "page" | "c" }) {
  return (
    <svg width="30" height="30" viewBox="0 0 30 30" className="overflow-visible">
      <circle cx="15" cy="15" r="15" fill="#fff" />
      <path d="M15 15L2 7.500A15 15 0 0 1 28 7.500z" fill="#e33b2e" />
      <path d="M15 15V8h13.300A15 15 0 0 1 15 30l6-11z" fill="#fcc934" />
      <path d="M15 15l6 4-6.500 11A15 15 0 0 1 2 7.500L9 19z" fill="#23a047" />
      <circle cx="15" cy="15" r="7" fill="#fff" />
      <circle cx="15" cy="15" r="5.500" fill="#2f76e8" />
      {badge === "page" && (
        <>
          <circle cx="22" cy="22" r="9.500" fill="#f7f9fa" />
          <path d="M19.500 17h3.500l2 2v3l-1 1.500h-4.500z" fill="#35a3d4" />
          <path d="M16 25.500h12" stroke="#6ea3c9" strokeWidth="2" strokeDasharray="1.500 0.500" />
        </>
      )}
      {badge === "c" && (
        <>
          <circle cx="22" cy="22" r="10" fill="#0b5394" />
          <text x="22" y="26.500" textAnchor="middle" fontSize="12" fontWeight="600" fontFamily="Roboto" fill="#d5e3f1">C</text>
        </>
      )}
    </svg>
  );
}

function TaskItem({ children, bar, active, w = "w-[62px]" }: { children: React.ReactNode; bar?: boolean; active?: boolean; w?: string }) {
  return (
    <div className={`relative flex h-[50px] shrink-0 items-center justify-center ${w} ${active ? "bg-[#3d4552]" : ""}`}>
      {children}
      {bar && <div className={`absolute bottom-0 h-[3px] bg-[#8ea1c0] ${active ? "w-full" : "w-[51px]"}`} />}
    </div>
  );
}

function Taskbar() {
  return (
    <div className={`flex h-[50px] w-full items-center bg-[#272d3b] text-white ${SEGOE}`}>
      <div className="flex w-[60px] shrink-0 items-center justify-center">
        <svg width="20" height="20" viewBox="0 0 20 20">
          <path d="M0 2.800L8 1.700v7.800H0zM9 1.500L20 0v9.500H9zM0 10.500h8v7.800l-8-1.100zM9 10.500h11V20L9 18.500z" fill="#fff" />
        </svg>
      </div>
      <div className="flex h-[50px] w-[430px] shrink-0 items-center overflow-hidden border border-[#6d737d] bg-[#525861] pl-[14px]">
        <svg width="21" height="21" viewBox="0 0 21 21" className="shrink-0">
          <circle cx="13" cy="7.500" r="6.700" stroke="#f1f1f1" strokeWidth="1.500" fill="none" />
          <path d="M8.500 12.500L.7 20.300" stroke="#f1f1f1" strokeWidth="1.500" />
        </svg>
        <span className="ml-[14px] flex-1 text-[18.500px] tracking-[-0.330px] text-[#dcdee1]">Type here to search</span>
        <svg width="98" height="48" viewBox="0 0 98 48" className="shrink-0">
          <path d="M26 27l10-8 5 1 7-6 8 5 6-5 7 3 6-5 8 4 5 5 5-4 5 4v18H26z" fill="url(#mount)" />
          <path d="M0 48q4-14 18-20 7-3 22-1 14-3 28-1 18 0 30 5v17z" fill="url(#sand)" />
          <path d="M20 29q12 5 26-1 0 5-6 7l-10 1z" fill="#fbd0a6" />
          <path d="M80 26l18 3v10q-12-3-18-6z" fill="#f9cda0" />
          <ellipse cx="60" cy="38" rx="31" ry="7" fill="#8a4a1f" />
          <ellipse cx="54" cy="38.500" rx="25" ry="6" fill="#f0a95a" />
          <ellipse cx="60" cy="37" rx="11" ry="3" fill="#a9622a" />
          <ellipse cx="57" cy="37.500" rx="8" ry="2.200" fill="#f3b56c" />
          <path d="M0 48q6-9 10-8l6 3 10-2 8 4 10-3 10 6z" fill="#f39a3c" />
        </svg>
      </div>
      <div className="flex w-[63px] shrink-0 items-center pl-[20px]">
        <svg width="20" height="20" viewBox="0 0 20 20">
          <path d="M1 0v3h12V0M1 20v-3h12v3M1 6h12v8H1zM18.500 0v4M18.500 11v9" stroke="#fff" strokeWidth="1.300" fill="none" />
          <rect x="17" y="6" width="3" height="3" fill="#fff" />
        </svg>
      </div>
      <TaskItem>
        <svg width="30" height="30" viewBox="0 0 30 30">
          <path d="M20 1h9v9M1 20v9h9" stroke="#8c0f14" strokeWidth="2" fill="none" />
          <rect x="1" y="1" width="28" height="28" rx="3" fill="#191717" />
          <path d="M1 13l5-1 5 1 3-3-2-1 4 0 2-4 1 3 6 2 2 4-2 4-3-2-4 1 2 2-5 1-4-2-5 2-5-2 4-1z" fill="#dc2a22" />
          <path d="M2 22q4-4 10-3 5 1 4 4-5 4-12 3M6 25q5 0 7-3" stroke="#c4211c" strokeWidth="1.300" fill="none" />
          <path d="M19 10l4 1M15 14l5-1" stroke="#191717" />
        </svg>
      </TaskItem>
      <TaskItem>
        <svg width="30" height="30" viewBox="0 0 30 30">
          <rect width="30" height="30" rx="2" fill="#4a4a4a" />
          <path d="M7.500 10L22.500 5.500v5.500L15 13.300l7.500 2.200v5L7.500 25v-5.300l7.500-2.400-7.500-2.300z" fill="#ff9800" />
        </svg>
      </TaskItem>
      <TaskItem>
        <svg width="30" height="30" viewBox="0 0 30 30">
          <circle cx="15" cy="15" r="15" fill="#5865f2" />
          <path d="M9 9.500q3-1.500 4-1.500l.7 1.300h2.600L17 8q1 0 4 1.500 3 5 3 10-2.500 2-5 2l-1-1.800q-3 .8-6 0l-1 1.800q-2.500 0-5-2Q6 14 9 9.500z" fill="#fff" />
          <circle cx="12" cy="15.500" r="1.800" fill="#5865f2" />
          <circle cx="18" cy="15.500" r="1.800" fill="#5865f2" />
        </svg>
      </TaskItem>
      <TaskItem>
        <svg width="30" height="30" viewBox="0 0 30 30">
          <circle cx="16" cy="15" r="12.500" fill="#151b22" stroke="#a98139" strokeWidth="1.500" />
          <circle cx="17" cy="15" r="9.500" fill="#12697a" />
          <path d="M14 9q8-2 9 5-4-4-8 0" fill="#2aa0a8" />
          <path d="M4 1h10l-1.500 4v18.500h9L25 21l-2 8H4.500L7 25V5z" fill="#cfa354" stroke="#2b200d" strokeWidth="1.200" />
        </svg>
      </TaskItem>
      <TaskItem bar>
        <svg width="28" height="24" viewBox="0 0 28 24">
          <path d="M0 2q0-2 2-2h8l2.500 3H28v20H0z" fill="#d9a319" />
          <rect x="0" y="3.500" width="28" height="19" fill="#ffd868" />
          <path d="M5 23.500V14q0-2 2-2h14q2 0 2 2v9.500h-5V17h-8v6.500z" fill="#3f93d4" />
        </svg>
        <div className="absolute right-[5px] bottom-0 h-[3px] w-[11px] border-l border-[#272d3b] bg-[#6c7a93]" />
      </TaskItem>
      <TaskItem><Chrome /></TaskItem>
      <TaskItem bar><Chrome badge="page" /></TaskItem>
      <TaskItem bar><Chrome badge="c" /></TaskItem>
      <TaskItem bar active w="w-[61px]"><QtMark w={24} h={20} pencil /></TaskItem>
      <div className="ml-auto flex items-center">
        <svg width="30" height="20" viewBox="0 0 30 20">
          <path d="M1.500 2q0-1 1-1h22q1 0 1 1v16q0 1-1 1h-22q-1 0-1-1zM25.500 5H29v13q0 1-1.500 1H24" stroke="#fff" strokeWidth="2" fill="none" />
          <path d="M5 5.500h17M14 9.500h8M14 12.500h8M14 15.500h8" stroke="#fff" strokeWidth="1.500" />
          <rect x="5.800" y="9.300" width="5.500" height="5.500" stroke="#fff" strokeWidth="1.600" fill="none" />
        </svg>
        <svg width="16" height="9" viewBox="0 0 16 9" className="ml-[32px]">
          <path d="M.5 8.500L8 1l7.500 7.500" stroke="#fff" strokeWidth="1.300" fill="none" />
        </svg>
        <svg width="16" height="16" viewBox="0 0 16 16" className="ml-[15px]">
          <g fill="none" stroke="#c6cad0" strokeWidth="1.300">
            <path d="M1 15.500A14.500 14.500 0 0 1 15.500 1" />
            <path d="M5 15.500A10.500 10.500 0 0 1 15.500 5" />
            <path d="M9 15.500A6.500 6.500 0 0 1 15.500 9" />
          </g>
          <circle cx="14" cy="14" r="1.700" fill="#fff" />
        </svg>
        <svg width="20" height="14" viewBox="0 0 20 14" className="ml-[11px]">
          <path d="M8 3.500h10v9H4.500V8" stroke="#fff" fill="none" />
          <path d="M7 8l2-2.500h7.500v5H6.500z" fill="#fff" />
          <path d="M19.300 6v4M1 2.500h5.500v2.500q-2.500 2.500-5.500 0zM2.300 0v3M5.300 0v3M3.800 6v3" stroke="#fff" strokeWidth="1.200" fill="none" />
        </svg>
        <svg width="19" height="14" viewBox="0 0 19 14" className="ml-[10px]">
          <path d="M1 4.500h2.500L7 1v12L3.500 9.500H1z" stroke="#fff" strokeWidth="1.200" fill="none" />
          <path d="M11 4l6.500 6.500M17.500 4L11 10.500" stroke="#fff" strokeWidth="1.300" />
        </svg>
        <span className="ml-[14px] w-[30px] text-[15px] tracking-[-0.400px]">ENG</span>
        <div className="ml-[6px] flex w-[94px] flex-col items-center text-[15px] leading-[23px] tracking-[-0.300px]">
          <span>8:29 CH</span>
          <span>18/03/2023</span>
        </div>
        <svg width="32" height="32" viewBox="0 0 32 32" className="mt-[2px] mr-[15px] ml-[13px]">
          <path d="M1 1h20v15H10l-5 4v-4H1z" fill="#fff" />
          <path d="M5 5h12M5 9h12M5 13h8" stroke="#272d3b" strokeWidth="1.200" />
          <circle cx="20.500" cy="20.500" r="9.700" fill="#3a4050" stroke="#8e939d" />
          <text x="20.500" y="25.500" textAnchor="middle" fontSize="14" fontWeight="700" fontFamily="Open Sans" fill="#fff">1</text>
        </svg>
      </div>
    </div>
  );
}

export default function App() {
  return (
    <div className={`flex h-[1080px] w-[1915px] flex-col overflow-hidden bg-[#f0f0f0] text-[14.500px] leading-[20px] tracking-[-0.250px] whitespace-nowrap text-black ${SEGOE}`}>
      <Defs />
      <div className="relative flex h-[28px] shrink-0 items-center bg-white pl-[4px]">
        <div className="absolute top-0 left-[809px] h-px w-[301px] bg-[#1d2433]" />
        <QtMark w={17} h={13} pencil />
        <span className="mt-[2px] ml-[6px] flex-1 tracking-[-0.050px]">Qt Designer</span>
        <svg width="130" height="14" viewBox="0 0 130 14" className="mr-[20px]">
          <g fill="none" stroke="#000" strokeWidth="1.200">
            <path d="M0 7.500h13M58.500 4.500h9v9h-9zM61 4.500V1.500h9.500v9H68M117 1.500l12 12M129 1.500l-12 12" />
          </g>
        </svg>
      </div>
      <div className="flex h-[27px] shrink-0 items-center border-b border-[#ececec] bg-white pl-[8px]">
        {menus.map(([m, w]) => (
          <span key={m} className={`mt-[4px] tracking-[-0.150px] ${w}`}>{m}</span>
        ))}
      </div>
      <div className="flex h-[41px] shrink-0 items-center border-b-2 border-[#b4b4b4]">
        <ToolGroup names={["new", "open", "save"]} width="w-[125px]" />
        <ToolGroup names={["front", "back"]} width="w-[88px]" />
        <ToolGroup names={["ew", "es", "eb", "et"]} width="w-[162px]" active="ew" />
        <div className="flex items-center pl-[4px]">
          <Handle />
          <div className="ml-[5px] flex">
            {["hl", "vl", "hsp", "vsp", "gl", "fl", "brk", "adj"].map((n) => (
              <div key={n} className="flex h-[35px] w-[37px] items-center justify-center"><Ico n={n} s={21} /></div>
            ))}
          </div>
        </div>
      </div>
      <div className="flex h-[909px] shrink-0">
        <WidgetBox />
        <div className="h-[909px] flex-1 border-x border-b border-[#828790] bg-[#a0a0a0]">
          <FormWindow />
        </div>
        <div className="w-[5px] shrink-0" />
        <RightDock />
      </div>
      <div className="h-[25px] shrink-0" />
      <Taskbar />
    </div>
  );
}
